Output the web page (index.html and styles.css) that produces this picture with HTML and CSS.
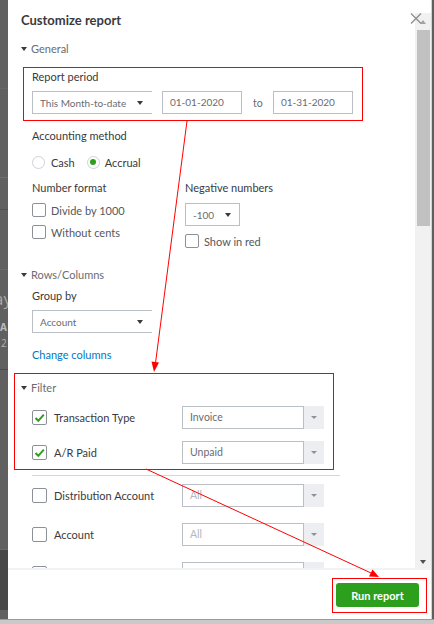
FILE: index.html
```html
<!DOCTYPE html>
<html>
<head>
<meta charset="utf-8">
<link rel="stylesheet" href="styles.css">
</head>
<body>
<div class="backdrop">
  <div class="bd-block bd-b1"></div>
  <div class="bd-block bd-b2"></div>
  <div class="bd-block bd-b3"></div>
  <div class="bd-block bd-b4"></div>
  <div class="bd-text bd-ay">ay</div>
  <div class="bd-text bd-a">A</div>
  <div class="bd-text bd-2">2</div>
  <div class="bd-block bd-b5"></div>
  <div class="bd-block bd-b6"></div>
  <div class="bd-block bd-b7"></div>
</div>
<div class="bd-bottom"></div>

<div class="dialog">
  <div class="dlg-main">
    <div class="content">
      <h1 class="title">Customize report</h1>

      <div class="sec-head"><span class="tri"></span>General</div>
      <div class="sec">
        <div class="label lbl-period">Report period</div>
        <div class="period-row">
          <div class="select sel-wide"><span>This Month-to-date</span><span class="caret"></span></div>
          <div class="date">01-01-2020</div>
          <span class="to">to</span>
          <div class="date">01-31-2020</div>
        </div>

        <div class="label lbl-acc">Accounting method</div>
        <div class="radios">
          <span class="radio"></span><span class="rlabel">Cash</span>
          <span class="radio radio-on"></span><span class="rlabel">Accrual</span>
        </div>

        <div class="cols">
          <div class="col col-left">
            <div class="label">Number format</div>
            <div class="chk-row"><span class="chk"></span>Divide by 1000</div>
            <div class="chk-row"><span class="chk"></span>Without cents</div>
          </div>
          <div class="col">
            <div class="label">Negative numbers</div>
            <div class="select sel-neg"><span>-100</span><span class="caret"></span></div>
            <div class="chk-row"><span class="chk"></span>Show in red</div>
          </div>
        </div>
      </div>

      <div class="sec-head sh-rows"><span class="tri"></span>Rows/Columns</div>
      <div class="sec">
        <div class="label lbl-group">Group by</div>
        <div class="select sel-wide sel-group"><span>Account</span><span class="caret"></span></div>
        <div class="link">Change columns</div>
      </div>

      <div class="sec-head sh-filter"><span class="tri"></span>Filter</div>
      <div class="sec">
        <div class="f-row f-first">
          <span class="f-chk"><svg width="15" height="15" viewBox="0 0 15 15"><path d="M3.5 8 L6.3 10.8 L11.8 4.6" fill="none" stroke="#2ca01c" stroke-width="2"/></svg></span>
          <span class="f-label">Transaction Type</span>
          <span class="f-select"><span class="f-val">Invoice</span><span class="f-btn"><span class="f-caret"></span></span></span>
        </div>
        <div class="f-row f-second">
          <span class="f-chk"><svg width="15" height="15" viewBox="0 0 15 15"><path d="M3.5 8 L6.3 10.8 L11.8 4.6" fill="none" stroke="#2ca01c" stroke-width="2"/></svg></span>
          <span class="f-label">A/R Paid</span>
          <span class="f-select"><span class="f-val">Unpaid</span><span class="f-btn"><span class="f-caret"></span></span></span>
        </div>
        <div class="sep"></div>
        <div class="f-row f-dist">
          <span class="f-chk"></span>
          <span class="f-label">Distribution Account</span>
          <span class="f-select"><span class="f-val f-muted">All</span><span class="f-btn"><span class="f-caret"></span></span></span>
        </div>
        <div class="f-row f-more">
          <span class="f-chk"></span>
          <span class="f-label">Account</span>
          <span class="f-select"><span class="f-val f-muted">All</span><span class="f-btn"><span class="f-caret"></span></span></span>
        </div>
        <div class="f-row f-more">
          <span class="f-chk"></span>
          <span class="f-label"></span>
          <span class="f-select"><span class="f-val"></span><span class="f-btn"></span></span>
        </div>
      </div>
    </div>
    <div class="scrollbar">
      <span class="sb-up"></span>
      <span class="sb-thumb"></span>
      <span class="sb-fill"></span>
      <span class="sb-down"></span>
    </div>
  </div>
  <div class="footer">
    <button class="run-btn">Run report</button>
  </div>
  <svg class="close" width="13" height="11" viewBox="0 0 13 11">
    <path d="M1 0.5 L11 10.5 M11 0.5 L1 10.5" stroke="#8d9096" stroke-width="1.4" fill="none"/>
  </svg>
</div>

<div class="mark mark-period"></div>
<div class="mark mark-filter"></div>
<div class="mark mark-run"></div>
<svg class="annot" width="434" height="624" viewBox="0 0 434 624">
  <path d="M187 121 L155.5 363" fill="none" stroke="#ff0000" stroke-width="1"/>
  <polygon points="154,372 159,362.5 151.5,361.5" fill="#ff0000"/>
  <path d="M146 469 L371 573" fill="none" stroke="#ff0000" stroke-width="1"/>
  <polygon points="379,577 369,576.5 372.5,569.5" fill="#ff0000"/>
</svg>
</body>
</html>
```

FILE: styles.css
```css
* { box-sizing: border-box; }

body {
  margin: 0;
  width: 434px;
  height: 624px;
  overflow: hidden;
  position: relative;
  background: #5f5f5f;
  font-family: Lato, "Open Sans", "DejaVu Sans", sans-serif;
  color: #393a3d;
}

/* page behind the modal */
.backdrop {
  width: 8px;
  height: 619px;
  overflow: hidden;
  background: #606060;
}
.bd-block { border-bottom: 1px solid #6e6e6e; }
.bd-b1 { height: 89px; border-bottom-color: #666; }
.bd-b2 { height: 89px; }
.bd-b3 { height: 32px; border-bottom-color: #525252; }
.bd-b4 { height: 60px; border-bottom-color: #6a6a6a; }
.bd-text {
  font-family: "Open Sans", sans-serif;
  color: #a9a9a9;
  white-space: nowrap;
}
.bd-ay { font-size: 17px; line-height: 22px; margin-left: -6px; margin-top: 18px; }
.bd-a { font-size: 10px; line-height: 14px; font-weight: bold; color: #bdbdbd; margin-top: 10px; }
.bd-2 { font-size: 10px; line-height: 14px; margin-left: 1px; color: #b3b3b3; margin-top: 2px; }
.bd-b5 { height: 20px; border-bottom-color: #4c4c4c; }
.bd-b6 { height: 180px; border-bottom-color: #6a6a6a; }
.bd-b7 { height: 60px; background: #474747; border: 0; }
.bd-bottom {
  height: 5px;
  background: #c9c9c9;
  border-top: 1px solid #9a9a9a;
}

/* dialog */
.dialog {
  position: absolute;
  left: 8px;
  top: 0;
  width: 424px;
  height: 619px;
  background: #fff;
  border-right: 1px solid #d2d2d2;
  display: flex;
  flex-direction: column;
}
.dlg-main {
  display: flex;
  height: 555px;
  margin-top: 13px;
}
.content {
  width: 407px;
  overflow: hidden;
  padding-left: 13px;
}
.title {
  margin: 0;
  font-size: 13px;
  font-weight: 700;
  line-height: 14px;
  color: #393a3d;
}
.sec-head {
  margin-top: 15px;
  height: 14px;
  line-height: 14px;
  font-size: 11px;
  color: #6b6c72;
  display: flex;
  align-items: center;
}
.tri {
  width: 0;
  height: 0;
  border-left: 3.5px solid transparent;
  border-right: 3.5px solid transparent;
  border-top: 4px solid #393a3d;
  margin-right: 4px;
}
.sh-rows { margin-top: 20px; }
.sh-filter { margin-top: 19px; }

.sec { padding-left: 11px; }
.label {
  font-size: 11px;
  line-height: 14px;
  height: 14px;
  color: #393a3d;
}
.lbl-period { margin-top: 14px; }
.lbl-acc { margin-top: 15px; }
.lbl-group { margin-top: 7px; }

.select {
  height: 23px;
  border: 1px solid #babec5;
  display: flex;
  align-items: center;
  justify-content: space-between;
  font-size: 10px;
  color: #6b6c72;
  white-space: nowrap;
}
.caret {
  width: 0;
  height: 0;
  border-left: 3.5px solid transparent;
  border-right: 3.5px solid transparent;
  border-top: 4px solid #393a3d;
  flex: none;
}
.sel-wide {
  width: 120px;
  border-right: none;
  padding: 0 9px 0 7px;
}
.sel-group { margin-top: 7px; }
.sel-neg {
  width: 55px;
  margin-top: 8px;
  padding: 0 8px 0 7px;
}

.period-row {
  margin-top: 7px;
  display: flex;
  align-items: center;
  height: 23px;
}
.date {
  margin-left: 10px;
  width: 80px;
  height: 23px;
  border: 1px solid #babec5;
  padding-left: 7px;
  font-size: 10px;
  line-height: 21px;
  color: #6b6c72;
}
.to {
  margin-left: 11px;
  width: 10px;
  font-size: 10.5px;
  color: #6b6c72;
}
.to + .date { margin-left: 10px; }

.radios {
  margin-top: 12px;
  height: 14px;
  display: flex;
  align-items: center;
  font-size: 11px;
  color: #393a3d;
}
.radio {
  width: 13px;
  height: 13px;
  border: 1px solid #ced1d6;
  border-radius: 50%;
  margin-right: 6px;
  display: flex;
  align-items: center;
  justify-content: center;
}
.radio-on::after {
  content: "";
  width: 6px;
  height: 6px;
  border-radius: 50%;
  background: #2ca01c;
}
.rlabel { margin-right: 12px; }
.radio-on { margin-right: 5px; }

.cols {
  margin-top: 12px;
  display: flex;
}
.col-left { width: 153px; }
.chk-row {
  margin-top: 8px;
  height: 14px;
  display: flex;
  align-items: center;
  font-size: 11px;
  color: #55575d;
}
.chk {
  width: 14px;
  height: 14px;
  border: 1px solid #8d9096;
  border-radius: 2px;
  margin-right: 5px;
  flex: none;
}

.link {
  margin-top: 15px;
  font-size: 11px;
  line-height: 14px;
  color: #0077c5;
}

/* filters */
.f-row {
  height: 23px;
  display: flex;
  align-items: center;
}
.f-first { margin-top: 11px; }
.f-second { margin-top: 12px; }
.f-dist { margin-top: 8px; }
.f-more { margin-top: 16px; }
.f-chk {
  width: 15px;
  height: 15px;
  border: 1px solid #8d9096;
  border-radius: 2px;
  margin-right: 7px;
  flex: none;
  display: flex;
  align-items: center;
  justify-content: center;
}
.f-chk svg { flex: none; }
.f-label {
  width: 128px;
  font-size: 11px;
  color: #393a3d;
  white-space: nowrap;
}
.f-select {
  display: flex;
  height: 23px;
}
.f-val {
  width: 122px;
  height: 23px;
  border: 1px solid #babec5;
  padding-left: 7px;
  font-size: 10.5px;
  line-height: 21px;
  color: #6b6c72;
}
.f-muted { color: #b4b7bc; }
.f-btn {
  width: 20px;
  height: 23px;
  background: #eceef1;
  display: flex;
  align-items: center;
  justify-content: center;
}
.f-caret {
  width: 0;
  height: 0;
  border-left: 3px solid transparent;
  border-right: 3px solid transparent;
  border-top: 3.5px solid #8d9096;
}
.sep {
  margin-top: 11px;
  width: 308px;
  height: 1px;
  background: #d4d7dc;
}

/* scrollbar */
.scrollbar {
  width: 16px;
  background: #f1f1f1;
  display: flex;
  flex-direction: column;
  align-items: center;
}
.sb-up {
  margin-top: 7px;
  width: 0;
  height: 0;
  border-left: 3.5px solid transparent;
  border-right: 3.5px solid transparent;
  border-bottom: 4px solid #a3a3a3;
}
.sb-thumb {
  margin-top: 6px;
  width: 13px;
  height: 196px;
  background: #c1c1c1;
}
.sb-fill { flex: 1; }
.sb-down {
  width: 0;
  height: 0;
  border-left: 3.5px solid transparent;
  border-right: 3.5px solid transparent;
  border-top: 4px solid #505050;
  margin-bottom: 4px;
}

.footer {
  flex: 1;
  border-top: 2px solid #f2f3f6;
  display: flex;
  justify-content: flex-end;
  align-items: flex-start;
  padding-right: 12px;
}
.run-btn {
  margin-top: 13px;
  width: 83px;
  height: 24px;
  border: 0;
  border-radius: 3px;
  background: #2ca01c;
  color: #fff;
  font-family: Lato, "Open Sans", sans-serif;
  font-size: 11px;
  font-weight: 700;
  padding: 0;
}

.close {
  position: absolute;
  left: 402px;
  top: 13px;
}

/* red annotation overlays */
.mark {
  position: absolute;
  border: 1px solid #ff0000;
  pointer-events: none;
}
.mark-period { left: 23px; top: 67px; width: 340px; height: 54px; }
.mark-filter { left: 14px; top: 373px; width: 320px; height: 97px; }
.mark-run { left: 332px; top: 578px; width: 95px; height: 35px; }

.annot {
  position: absolute;
  left: 0;
  top: 0;
  pointer-events: none;
}
```
